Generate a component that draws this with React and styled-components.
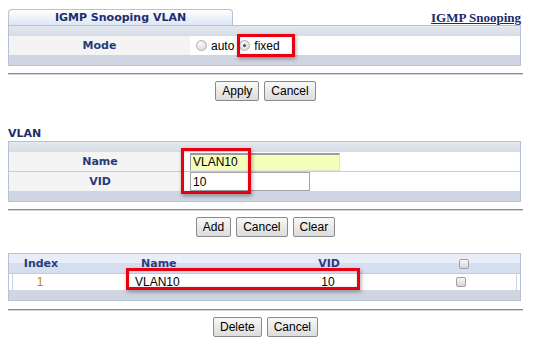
import React from 'react';
import styled, { createGlobalStyle } from 'styled-components';

const GlobalStyle = createGlobalStyle`
    body {
        margin: 0;
        background: #ffffff;
        font-family: "Liberation Sans", Arial, sans-serif;
    }
`;

export default function App() {
    return (
        <Page>
            <GlobalStyle />
            <TopBar>
                <Tab>IGMP Snooping VLAN</Tab>
                <TopLink href="#">IGMP Snooping</TopLink>
            </TopBar>

            <Panel>
                <Strip top />
                <FormRow label={181}>
                    <LabelCell>Mode</LabelCell>
                    <ValueCell pad={4}>
                        <Radio />
                        <OptionText>auto</OptionText>
                        <Radio checked />
                        <OptionText>fixed</OptionText>
                    </ValueCell>
                </FormRow>
                <Strip />
                <Highlight style={{ left: 228, top: 8, width: 58, height: 23 }} />
            </Panel>

            <Rule />
            <ButtonRow>
                <Button>Apply</Button>
                <Button>Cancel</Button>
            </ButtonRow>

            <SectionTitle>VLAN</SectionTitle>
            <Panel>
                <Strip top />
                <FormRow label={172} divider>
                    <LabelCell indent={10}>Name</LabelCell>
                    <ValueCell pad={9}>
                        <NameInput defaultValue="VLAN10" />
                    </ValueCell>
                </FormRow>
                <FormRow label={172}>
                    <LabelCell indent={10}>VID</LabelCell>
                    <ValueCell pad={9}>
                        <VidInput defaultValue="10" />
                    </ValueCell>
                </FormRow>
                <Strip />
                <Highlight style={{ left: 172, top: 6, width: 70, height: 46 }} />
            </Panel>

            <Rule />
            <ButtonRow>
                <Button>Add</Button>
                <Button>Cancel</Button>
                <Button>Clear</Button>
            </ButtonRow>

            <Panel spaced>
                <HeadRow>
                    <HeadCell center>Index</HeadCell>
                    <HeadCell indent={68}>Name</HeadCell>
                    <HeadCell center>VID</HeadCell>
                    <HeadCell center><Check /></HeadCell>
                </HeadRow>
                <DataRow>
                    <DataCell center color="#cc8600">1</DataCell>
                    <DataCell indent={68}>VLAN10</DataCell>
                    <DataCell center>10</DataCell>
                    <DataCell center><Check /></DataCell>
                </DataRow>
                <Strip />
                <Highlight style={{ left: 117, top: 14, width: 234, height: 22 }} />
            </Panel>

            <Rule wide />
            <ButtonRow>
                <Button>Delete</Button>
                <Button>Cancel</Button>
            </ButtonRow>
        </Page>
    );
}

const Page = styled.div`
    width: 515px;
    padding: 9px 0 20px 8px;
`;

const TopBar = styled.div`
    display: flex;
    justify-content: space-between;
    align-items: flex-end;
    width: 513px;
    height: 16px;
`;

const Tab = styled.div`
    box-sizing: border-box;
    width: 225px;
    height: 16px;
    border: 1px solid #b6c1d6;
    border-bottom: none;
    border-radius: 4px 4px 0 0;
    background: linear-gradient(#ffffff, #dde6f5);
    text-align: center;
    font-family: "DejaVu Sans", Verdana, sans-serif;
    font-size: 11px;
    font-weight: bold;
    line-height: 15px;
    color: #1f2d6b;
`;

const TopLink = styled.a`
    font-family: "Liberation Serif", "Times New Roman", serif;
    font-size: 13px;
    font-weight: bold;
    line-height: 15px;
    color: #1d2a6a;
    text-decoration: underline;
`;

const Panel = styled.div`
    position: relative;
    box-sizing: border-box;
    width: 513px;
    border: 1px solid #b6c1d6;
    margin-top: ${p => (p.spaced ? '16px' : '0')};
`;

const Strip = styled.div`
    height: 10px;
    background: ${p => (p.top ? 'linear-gradient(#e4e8ef, #d6dce6)' : '#cfd6e2')};
`;

const FormRow = styled.div`
    display: grid;
    grid-template-columns: ${p => p.label}px 1fr;
    height: 19px;
    border-bottom: ${p => (p.divider ? '1px solid #c4cddd' : 'none')};
`;

const LabelCell = styled.div`
    background: #f4f4f4;
    padding-left: ${p => p.indent || 0}px;
    text-align: center;
    font-family: "DejaVu Sans", Verdana, sans-serif;
    font-size: 11px;
    font-weight: bold;
    line-height: 19px;
    color: #263c7a;
`;

const ValueCell = styled.div`
    display: flex;
    align-items: center;
    padding-left: ${p => p.pad}px;
    background: #ffffff;
`;

const Radio = styled.span`
    position: relative;
    box-sizing: border-box;
    width: 11px;
    height: 11px;
    border: 1px solid #b0b0b0;
    border-radius: 50%;
    background: radial-gradient(circle at 40% 35%, #fbfbfb, #d2d2d2);
    margin-right: 4px;
    margin-left: 2px;
    &::after {
        content: '';
        display: ${p => (p.checked ? 'block' : 'none')};
        position: absolute;
        left: 3px;
        top: 3px;
        width: 3px;
        height: 3px;
        border-radius: 50%;
        background: #4a4a4a;
    }
`;

const OptionText = styled.span`
    font-size: 12px;
    color: #000000;
    margin-right: 3px;
`;

const Input = styled.input`
    box-sizing: border-box;
    font-family: "Liberation Sans", Arial, sans-serif;
    font-size: 12px;
    color: #000000;
    padding: 0 2px;
    margin: 0;
    outline: none;
`;

const NameInput = styled(Input)`
    width: 150px;
    height: 18px;
    background: #f4ffba;
    border: 1px solid #e2e2e2;
    border-top: 2px solid #9c9c9c;
    border-left: 1px solid #9c9c9c;
`;

const VidInput = styled(Input)`
    width: 120px;
    height: 19px;
    background: #ffffff;
    border: 1px solid #a4a4a4;
`;

const Highlight = styled.div`
    position: absolute;
    box-sizing: border-box;
    border: 3px solid #e60012;
    box-shadow: 1px 2px 4px rgba(0, 0, 0, 0.35), inset 0 0 3px rgba(0, 0, 0, 0.15);
    pointer-events: none;
`;

const Rule = styled.div`
    width: 515px;
    height: 0;
    margin-top: ${p => (p.wide ? '8px' : '7px')};
    border-top: 1px solid #8c8c8c;
    border-bottom: 1px solid #d4d4d4;
`;

const ButtonRow = styled.div`
    display: flex;
    justify-content: center;
    gap: 5px;
    width: 515px;
    margin-top: 6px;
`;

const Button = styled.button`
    height: 20px;
    padding: 0 6px;
    border: 1px solid #8a8a8a;
    border-radius: 2px;
    background: linear-gradient(#f8f8f8, #dcdcdc);
    font-family: "Liberation Sans", Arial, sans-serif;
    font-size: 12px;
    color: #000000;
    line-height: 18px;
`;

const SectionTitle = styled.div`
    margin-top: 26px;
    height: 14px;
    font-family: "DejaVu Sans", Verdana, sans-serif;
    font-size: 11px;
    font-weight: bold;
    line-height: 14px;
    color: #1f2d6b;
`;

const HeadRow = styled.div`
    display: grid;
    grid-template-columns: 64px 186px 140px 121px;
    height: 19px;
    background: linear-gradient(#e8edf8 0%, #e8edf8 45%, #d5dff0 45%, #d5dff0 100%);
    border-bottom: 1px solid #c2cbdb;
`;

const HeadCell = styled.div`
    display: flex;
    align-items: center;
    justify-content: ${p => (p.center ? 'center' : 'flex-start')};
    padding-left: ${p => p.indent || 0}px;
    font-family: "DejaVu Sans", Verdana, sans-serif;
    font-size: 11px;
    font-weight: bold;
    color: #2a3c80;
`;

const DataRow = styled.div`
    display: grid;
    grid-template-columns: 54px 191px 140px 1fr;
    height: 16px;
    margin: 0 3px;
    border-left: 1px solid #d0d6e0;
    border-right: 1px solid #d0d6e0;
    background: #ffffff;
`;

const DataCell = styled.div`
    display: flex;
    align-items: center;
    justify-content: ${p => (p.center ? 'center' : 'flex-start')};
    padding-left: ${p => p.indent || 0}px;
    font-size: 12px;
    color: ${p => p.color || '#000000'};
`;

const Check = styled.span`
    box-sizing: border-box;
    width: 10px;
    height: 10px;
    margin-left: 8px;
    border: 1px solid #a0a0a0;
    border-radius: 2px;
    background: linear-gradient(#f6f6f6, #d6d6d6);
`;
